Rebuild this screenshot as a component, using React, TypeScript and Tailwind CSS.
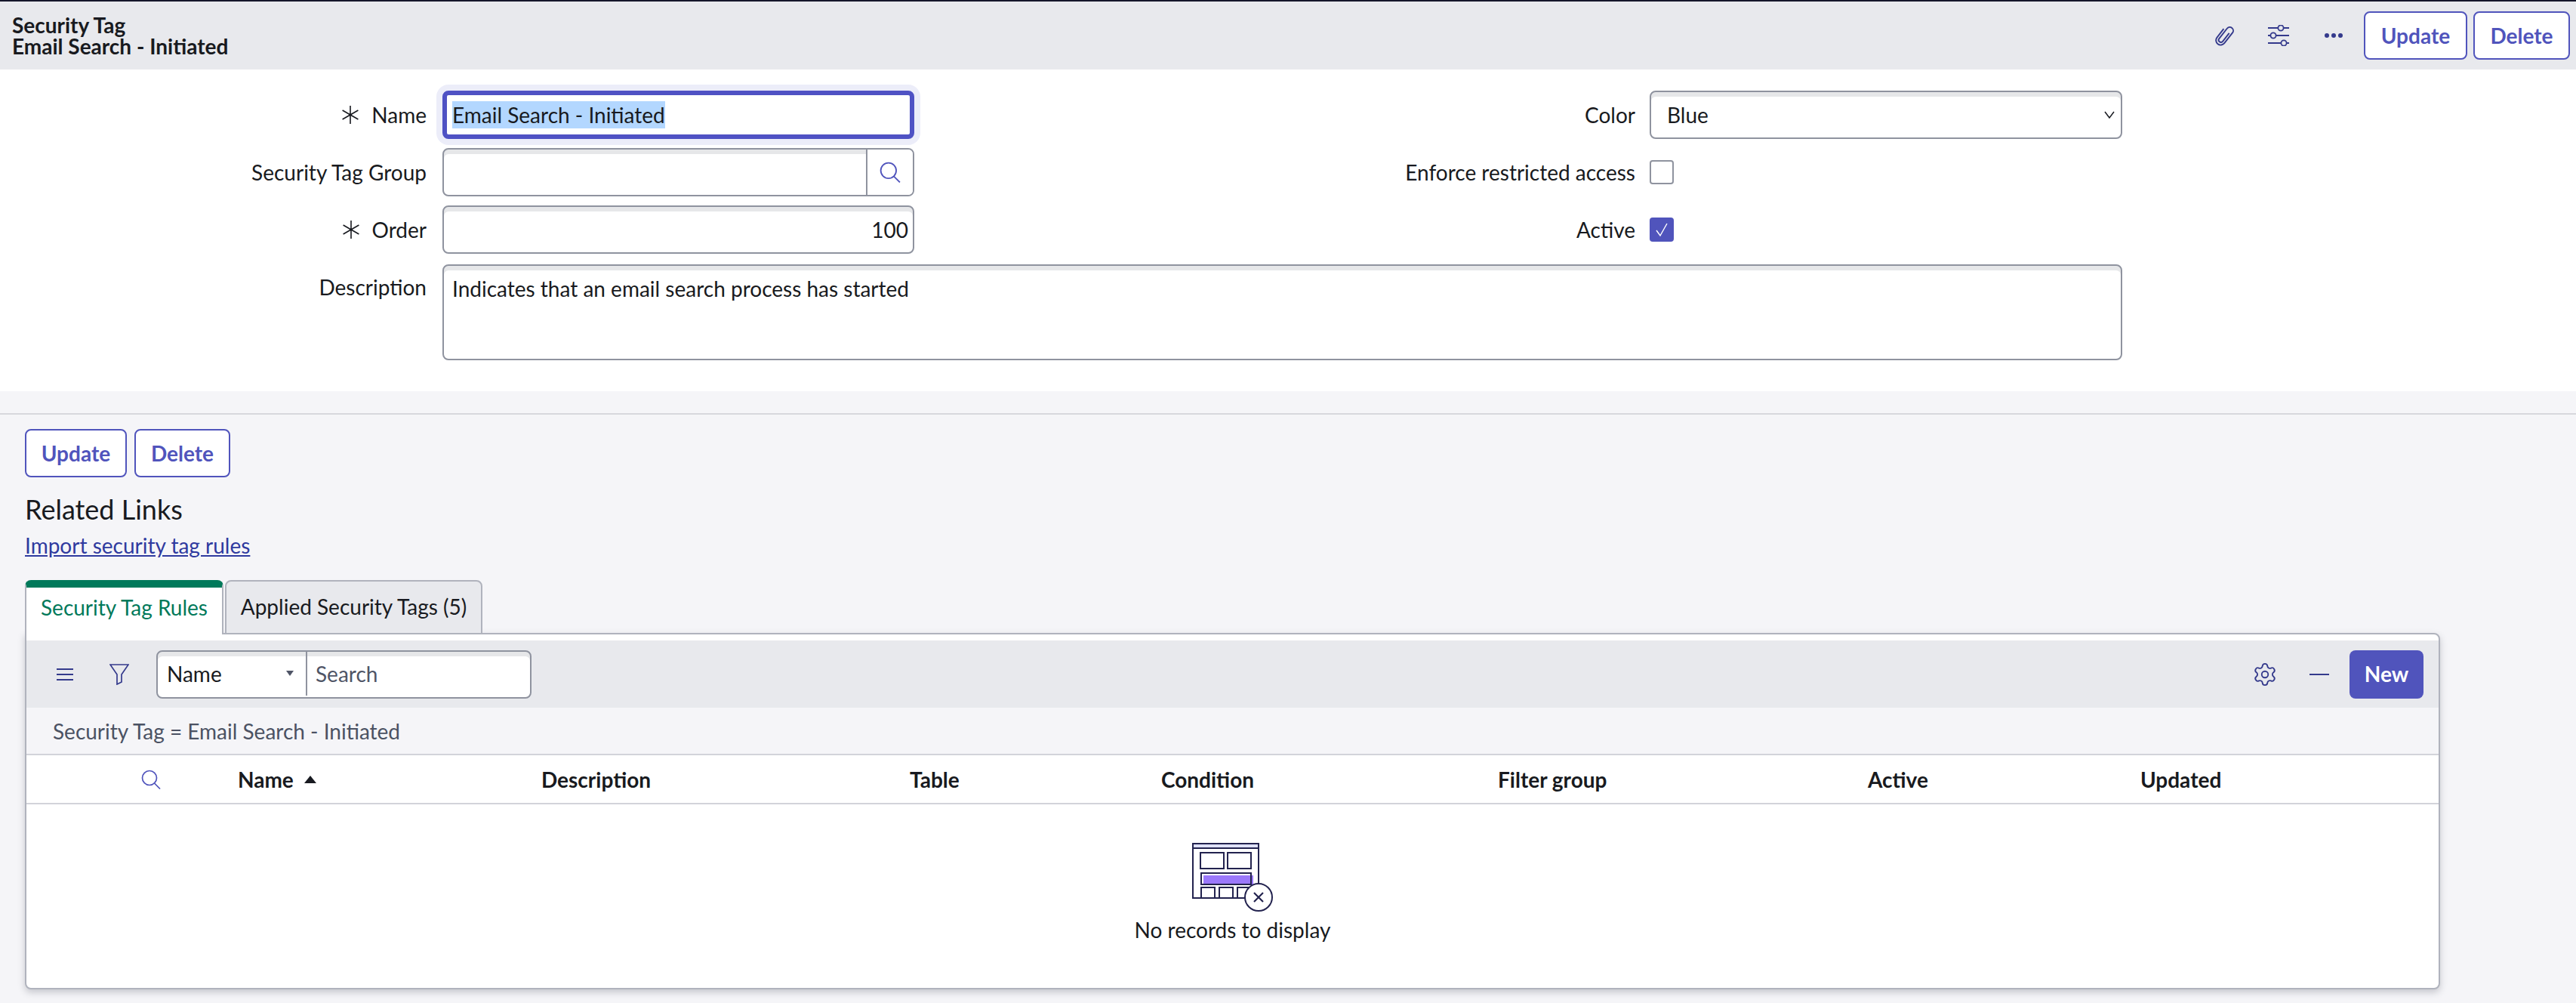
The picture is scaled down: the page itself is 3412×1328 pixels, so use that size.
import { Settings } from 'lucide-react'

const COLUMNS = [
  { label: 'Name', width: 'w-[402px]', sorted: true },
  { label: 'Description', width: 'w-[488px]' },
  { label: 'Table', width: 'w-[333px]' },
  { label: 'Condition', width: 'w-[446px]' },
  { label: 'Filter group', width: 'w-[490px]' },
  { label: 'Active', width: 'w-[361px]' },
  { label: 'Updated', width: 'w-[300px]' },
]

const FIELD = 'rounded-lg border-2 border-[#8f939f] bg-white shadow-[inset_0_6px_0_#e6e7e9]'

function Required() {
  return (
    <svg viewBox="0 0 24 24" className="mr-4 h-6 w-6 shrink-0 stroke-[#181a20]" strokeWidth="1.6" fill="none">
      <path d="M12 0v24M1.6 6l20.8 12M22.4 6 1.6 18" />
    </svg>
  )
}

function Label({ children, required, width }: { children: string; required?: boolean; width: string }) {
  return (
    <div className={`flex shrink-0 items-center justify-end ${width}`}>
      {required && <Required />}
      <span>{children}</span>
    </div>
  )
}

function OutlineButton({ children, width }: { children: string; width: string }) {
  return (
    <button className={`h-16 rounded-lg border-2 border-[#5054bc] bg-white font-bold text-[#5054bc] ${width}`}>
      {children}
    </button>
  )
}

function SearchGlyph({ className }: { className: string }) {
  return (
    <svg viewBox="0 0 26 26" className={className} fill="none" stroke="#5054bc" strokeWidth="1.7">
      <circle cx="11" cy="11" r="9.5" />
      <path d="m17.5 18 7.5 7.5" />
    </svg>
  )
}

function Checkbox({ checked }: { checked?: boolean }) {
  if (checked) {
    return (
      <div className="flex h-8 w-8 items-center justify-center rounded bg-[#5054bc]">
        <svg viewBox="0 0 24 24" className="h-6 w-6" fill="none" stroke="white" strokeWidth="1.4">
          <path d="m5 13 5 7L19 4" />
        </svg>
      </div>
    )
  }
  return <div className="h-8 w-8 rounded border-2 border-[#8f939f] bg-white" />
}

function EmptyIllustration() {
  return (
    <svg viewBox="0 0 110 94" className="h-[94px] w-[110px]" fill="none" stroke="#23234f" strokeWidth="2">
      <rect x="2" y="2" width="87" height="72" fill="white" />
      <rect x="2" y="2" width="87" height="6" fill="#dfe1fb" />
      <rect x="12" y="14" width="31" height="21" />
      <rect x="48" y="14" width="31" height="21" />
      <rect x="16" y="44" width="66" height="13" fill="#9b78fb" stroke="none" />
      <rect x="13" y="41" width="66" height="15" />
      <rect x="13" y="60" width="18" height="14" />
      <rect x="37" y="60" width="18" height="14" />
      <rect x="61" y="60" width="18" height="14" />
      <circle cx="89" cy="73" r="18" fill="white" />
      <path d="m83 67 12 12M95 67 83 79" strokeWidth="2.2" />
    </svg>
  )
}

export default function App() {
  return (
    <div className="h-[1328px] w-[3412px] overflow-hidden bg-[#f5f5f8] font-[family-name:Lato,sans-serif] text-[28px] leading-9 text-[#181a20]">
      {/* Barra superior */}
      <header className="flex h-[92px] items-center border-t-2 border-[#15162a] bg-[#e8e9ed] pr-2 pl-4">
        <div className="flex-1 font-bold leading-7">
          <div>Security Tag</div>
          <div>Email Search - Initiated</div>
        </div>
        <svg viewBox="0 0 26 30" className="h-[30px] w-[26px]" fill="none" stroke="#343a8c" strokeWidth="1.9">
          <g transform="rotate(38 13 15)">
            <path d="M15.5 9v14a3 3 0 0 1-6 0V6a4.6 4.6 0 0 1 9.2 0v17.5a6.2 6.2 0 0 1-12.4 0V9" />
          </g>
        </svg>
        <svg viewBox="0 0 28 28" className="ml-[44px] h-7 w-7" fill="none" stroke="#343a8c" strokeWidth="1.8">
          <path d="M0 4h28M0 14h28M0 24h28" />
          <circle cx="17" cy="4" r="3.6" fill="#e8e9ed" />
          <circle cx="7" cy="14" r="3.6" fill="#e8e9ed" />
          <circle cx="21" cy="24" r="3.6" fill="#e8e9ed" />
        </svg>
        <svg viewBox="0 0 24 6" className="ml-[47px] h-[6px] w-6" fill="#343a8c">
          <circle cx="3" cy="3" r="3" />
          <circle cx="12" cy="3" r="3" />
          <circle cx="21" cy="3" r="3" />
        </svg>
        <div className="ml-7 flex gap-2">
          <OutlineButton width="w-[137px]">Update</OutlineButton>
          <OutlineButton width="w-[128px]">Delete</OutlineButton>
        </div>
      </header>

      {/* Formulario */}
      <section className="flex h-[426px] flex-col bg-white pt-7">
        <div className="flex h-16 items-center">
          <Label required width="w-[565px]">Name</Label>
          <div className="ml-[21px] flex h-16 w-[625px] items-center rounded-lg border-[6px] border-[#4f52c4] bg-white pl-[7px] shadow-[0_0_0_8px_#ecedf9]">
            <span className="bg-[#b3d7ff]">Email Search - Initiated</span>
          </div>
          <Label width="w-[955px]">Color</Label>
          <div className={`ml-[19px] flex h-16 w-[626px] items-center justify-between pr-2 pl-[21px] ${FIELD}`}>
            <span>Blue</span>
            <svg viewBox="0 0 14 10" className="h-[10px] w-[14px]" fill="none" stroke="#181a20" strokeWidth="1.5">
              <path d="m1 1 6 8 6-8" />
            </svg>
          </div>
        </div>

        <div className="mt-3 flex h-16 items-center">
          <Label width="w-[565px]">Security Tag Group</Label>
          <div className={`ml-[21px] flex h-16 w-[625px] overflow-hidden ${FIELD}`}>
            <div className="flex-1" />
            <div className="flex w-[62px] items-center justify-center border-l-2 border-[#8f939f] bg-white">
              <SearchGlyph className="h-7 w-7" />
            </div>
          </div>
          <Label width="w-[955px]">Enforce restricted access</Label>
          <div className="ml-[19px]">
            <Checkbox />
          </div>
        </div>

        <div className="mt-3 flex h-16 items-center">
          <Label required width="w-[565px]">Order</Label>
          <div className={`ml-[21px] flex h-16 w-[625px] items-center justify-end pr-[6px] ${FIELD}`}>100</div>
          <Label width="w-[955px]">Active</Label>
          <div className="ml-[19px]">
            <Checkbox checked />
          </div>
        </div>

        <div className="mt-[14px] flex items-start">
          <div className="mt-3">
            <Label width="w-[565px]">Description</Label>
          </div>
          <div className={`ml-[21px] h-[127px] w-[2225px] pt-3 pl-[11px] ${FIELD}`}>
            Indicates that an email search process has started
          </div>
        </div>
      </section>

      <div className="mt-[29px] h-[2px] bg-[#d7d8dd]" />

      {/* Acciones y enlaces */}
      <div className="mt-[19px] flex gap-[10px] pl-[33px]">
        <OutlineButton width="w-[135px]">Update</OutlineButton>
        <OutlineButton width="w-[127px]">Delete</OutlineButton>
      </div>
      <h2 className="mt-5 pl-[33px] text-[36px] leading-[44px]">Related Links</h2>
      <a className="mt-2 block pl-[33px] text-[#2f3a9f] underline">Import security tag rules</a>

      {/* Pestañas */}
      <div className="relative z-10 mt-7 -mb-[2px] flex h-[72px] pl-[33px]">
        <div className="flex h-[72px] w-[263px] items-center justify-center rounded-t-lg border-x-2 border-t-[10px] border-r-[#b0b3bd] border-l-[#b0b3bd] border-t-[#00795a] bg-white pb-[10px] text-[#00795a]">
          Security Tag Rules
        </div>
        <div className="ml-[2px] flex h-[72px] w-[341px] items-center justify-center rounded-t-lg border-2 border-[#b0b3bd] bg-[#e8e9ed] pb-[2px]">
          Applied Security Tags (5)
        </div>
      </div>

      {/* Lista */}
      <div className="ml-[33px] flex h-[472px] w-[3199px] flex-col rounded-lg rounded-tl-none border-2 border-[#b0b3bd] bg-white pt-2 shadow-[0_4px_10px_rgba(60,64,80,0.25)]">
        <div className="flex h-[89px] items-center bg-[#e8e9ed] pr-5">
          <svg viewBox="0 0 22 16" className="ml-10 h-4 w-[22px]" fill="none" stroke="#343a8c" strokeWidth="1.8">
            <path d="M0 1h22M0 8h22M0 15h22" />
          </svg>
          <svg viewBox="0 0 26 28" className="ml-[48px] h-7 w-[26px]" fill="none" stroke="#343a8c" strokeWidth="1.7">
            <path d="M1 1h24l-9 13v10l-6 3V14z" />
          </svg>
          <div className="ml-[36px] flex h-16 w-[497px] rounded-lg border-2 border-[#8f939f] bg-white pb-[2px] shadow-[inset_0_6px_0_#e6e7e9]">
            <div className="flex w-[198px] items-center justify-between border-r-2 border-[#8f939f] pr-4 pl-3">
              <span>Name</span>
              <span className="h-0 w-0 border-x-[5px] border-t-[7px] border-x-transparent border-t-[#4f5566]" />
            </div>
            <div className="flex flex-1 items-center pl-[11px] text-[#4f5566]">Search</div>
          </div>
          <div className="flex-1" />
          <Settings size={34} strokeWidth={1.3} color="#343a8c" />
          <div className="ml-[42px] h-[2px] w-[26px] bg-[#343a8c]" />
          <button className="ml-[27px] h-16 w-[98px] rounded-lg bg-[#5054bc] pb-[2px] font-bold text-white">New</button>
        </div>
        <div className="flex h-[63px] items-center border-b-2 border-[#d2d3da] bg-[#f5f5f8] pl-[35px] text-[#4b5263]">
          Security Tag = Email Search - Initiated
        </div>
        <div className="flex h-[65px] items-center border-b-2 border-[#d2d3da] font-bold">
          <div className="w-[280px] pl-[152px]">
            <SearchGlyph className="h-[26px] w-[26px]" />
          </div>
          {COLUMNS.map((col) => (
            <div key={col.label} className={`flex items-center ${col.width}`}>
              <span>{col.label}</span>
              {col.sorted && <span className="ml-[14px] h-0 w-0 border-x-[8px] border-b-[10px] border-x-transparent border-b-[#181a20]" />}
            </div>
          ))}
        </div>
        <div className="flex flex-1 flex-col items-center pt-[50px]">
          <EmptyIllustration />
          <div className="mt-1">No records to display</div>
        </div>
      </div>
    </div>
  )
}
